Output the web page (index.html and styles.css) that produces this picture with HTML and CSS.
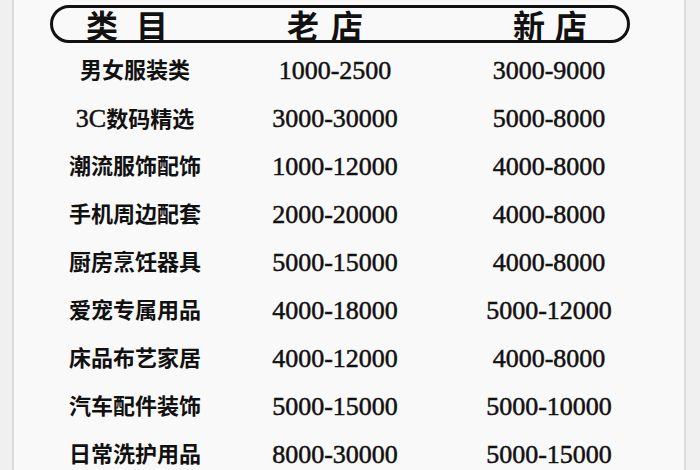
FILE: index.html
```html
<!DOCTYPE html>
<html lang="zh">
<head>
<meta charset="utf-8">
<link rel="stylesheet" href="styles.css">
</head>
<body>
<div class="page">
  <div class="pill">
    <div class="hcell c1"><span>类</span><span>目</span></div>
    <div class="hcell c2"><span>老</span><span>店</span></div>
    <div class="hcell c3"><span>新</span><span>店</span></div>
  </div>
  <div class="table">
    <div class="cat">男女服装类</div><div class="num">1000-2500</div><div class="num">3000-9000</div>
    <div class="cat"><span class="lat">3C</span>数码精选</div><div class="num">3000-30000</div><div class="num">5000-8000</div>
    <div class="cat">潮流服饰配饰</div><div class="num">1000-12000</div><div class="num">4000-8000</div>
    <div class="cat">手机周边配套</div><div class="num">2000-20000</div><div class="num">4000-8000</div>
    <div class="cat">厨房烹饪器具</div><div class="num">5000-15000</div><div class="num">4000-8000</div>
    <div class="cat">爱宠专属用品</div><div class="num">4000-18000</div><div class="num">5000-12000</div>
    <div class="cat">床品布艺家居</div><div class="num">4000-12000</div><div class="num">4000-8000</div>
    <div class="cat">汽车配件装饰</div><div class="num">5000-15000</div><div class="num">5000-10000</div>
    <div class="cat">日常洗护用品</div><div class="num">8000-30000</div><div class="num">5000-15000</div>
  </div>
</div>
</body>
</html>
```
FILE: styles.css
```css
html, body {
  margin: 0;
  padding: 0;
}
body {
  width: 700px;
  height: 470px;
  overflow: hidden;
  background: #f0f0f0;
  font-family: "Liberation Serif", "Noto Sans CJK SC", serif;
  color: #111;
}
.page {
  margin: 0 14px 0 12px;
  height: 470px;
  background: #f9f9f9;
  border-left: 2px solid #d9d9d9;
  border-right: 2px solid #dcdcdc;
  padding-top: 5px;
  box-sizing: border-box;
}
.pill {
  margin-left: 36px;
  width: 580px;
  height: 38px;
  box-sizing: border-box;
  border: 3px solid #111;
  border-radius: 19px;
  display: grid;
  grid-template-columns: 148px 248px 178px;
  align-items: center;
}
.hcell {
  display: flex;
  justify-content: center;
  gap: 18px;
  font-family: "Noto Sans CJK SC", sans-serif;
  font-weight: 700;
  font-size: 32px;
  line-height: 32px;
}
.hcell.c2 { gap: 12px; }
.hcell.c3 { gap: 10px; padding-left: 24px; }
.table {
  margin-top: 4px;
  margin-left: 21px;
  display: grid;
  grid-template-columns: 200px 200px 228px;
  grid-auto-rows: 48px;
  align-items: center;
  justify-items: center;
}
.cat {
  font-family: "Liberation Serif", "Noto Sans CJK SC", serif;
  font-weight: 700;
  font-size: 22px;
  line-height: 28px;
}
.lat {
  font-weight: 400;
  font-size: 26px;
  -webkit-text-stroke: 0.5px #111;
}
.num {
  font-size: 26px;
  line-height: 28px;
  -webkit-text-stroke: 0.5px #111;
}
```
